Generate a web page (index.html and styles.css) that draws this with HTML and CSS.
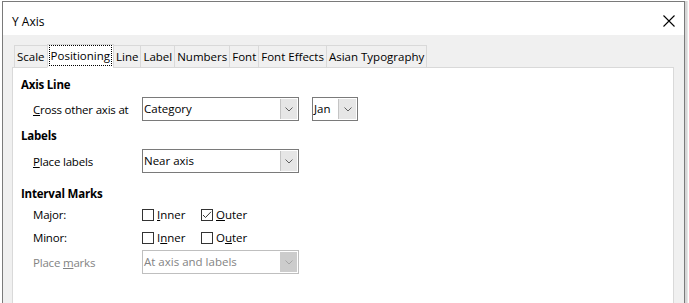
FILE: index.html
```html
<!DOCTYPE html>
<html>
<head>
<meta charset="utf-8">
<link rel="stylesheet" href="styles.css">
</head>
<body>
<div class="window">
  <div class="titlebar">
    <span class="title">Y Axis</span>
    <svg class="close" width="12" height="12" viewBox="0 0 12 12"><path d="M0.5 0.5 L11.5 11.5 M11.5 0.5 L0.5 11.5" stroke="#000" stroke-width="1.1" fill="none"/></svg>
  </div>
  <div class="body">
    <div class="tabs">
      <div class="tab">Scale</div>
      <div class="tab active"><span class="focus">Positioning</span></div>
      <div class="tab">Line</div>
      <div class="tab">Label</div>
      <div class="tab">Numbers</div>
      <div class="tab">Font</div>
      <div class="tab">Font Effects</div>
      <div class="tab">Asian Typography</div>
    </div>
    <div class="panel">
      <div class="heading h1">Axis Line</div>
      <div class="row r-cross">
        <span class="label"><u>C</u>ross other axis at</span>
        <div class="combo wide"><span class="val">Category</span><span class="btn"><svg width="8" height="5" viewBox="0 0 8 5"><path d="M0.5 0.5 L4 4 L7.5 0.5" stroke="#606060" fill="none"/></svg></span></div>
        <div class="combo small"><span class="val">Jan</span><span class="btn"><svg width="8" height="5" viewBox="0 0 8 5"><path d="M0.5 0.5 L4 4 L7.5 0.5" stroke="#606060" fill="none"/></svg></span></div>
      </div>
      <div class="heading h2">Labels</div>
      <div class="row r-place">
        <span class="label"><u>P</u>lace labels</span>
        <div class="combo wide"><span class="val">Near axis</span><span class="btn"><svg width="8" height="5" viewBox="0 0 8 5"><path d="M0.5 0.5 L4 4 L7.5 0.5" stroke="#606060" fill="none"/></svg></span></div>
      </div>
      <div class="heading h3">Interval Marks</div>
      <div class="row r-check r-major">
        <span class="label">Major:</span>
        <span class="check"><span class="box"></span><span><u>I</u>nner</span></span>
        <span class="check"><span class="box"><svg width="10" height="10" viewBox="0 0 10 10"><path d="M1 5 L3.5 7.5 L9 1.8" stroke="#333" stroke-width="1" fill="none"/></svg></span><span><u>O</u>uter</span></span>
      </div>
      <div class="row r-check r-minor">
        <span class="label">Minor:</span>
        <span class="check"><span class="box"></span><span>I<u>n</u>ner</span></span>
        <span class="check"><span class="box"></span><span>O<u>u</u>ter</span></span>
      </div>
      <div class="row r-marks disabled">
        <span class="label">Place <u>m</u>arks</span>
        <div class="combo wide dis"><span class="val">At axis and labels</span><span class="btn"><svg width="8" height="5" viewBox="0 0 8 5"><path d="M0.5 0.5 L4 4 L7.5 0.5" stroke="#a6a6a6" fill="none"/></svg></span></div>
      </div>
    </div>
  </div>
</div>
</body>
</html>
```

FILE: styles.css
```css
html, body {
  margin: 0;
  padding: 0;
  background: #ffffff;
  overflow: hidden;
}
body {
  font-family: "Open Sans", "Noto Sans", sans-serif;
  font-size: 11.5px;
  color: #000;
  width: 689px;
  height: 303px;
}
.window {
  margin: 1px 0 0 2px;
  width: 681px;
  height: 310px;
  border: 1px solid #7a7a7a;
  border-bottom: none;
  box-shadow: 2px 0 0 #d6d6d6, 3px 0 0 #e6e6e6;
  display: flex;
  flex-direction: column;
}
.titlebar {
  height: 33px;
  background: #fff;
  display: flex;
  align-items: center;
  justify-content: space-between;
  padding: 0 9px 0 9px;
  flex: none;
}
.title {
  font-size: 12px;
  padding-top: 5px;
}
.close {
  margin-top: 4px;
}
.body {
  flex: 1;
  background: #f0f0f0;
  padding: 9px 10px 0 9px;
  display: flex;
  flex-direction: column;
}
.tabs {
  display: flex;
  align-items: flex-end;
  height: 24px;
  padding-left: 2px;
  position: relative;
  z-index: 1;
  margin-bottom: -1px;
  flex: none;
}
.tab {
  height: 21px;
  line-height: 21px;
  padding: 0 2px;
  border: 1px solid #d9d9d9;
  margin-right: -1px;
  background: #f0f0f0;
  white-space: nowrap;
}
.tab.active {
  height: 22px;
  background: #fff;
  border-bottom-color: #fff;
  padding: 0 1px;
  display: flex;
  align-items: stretch;
}
.focus {
  border: 1px dotted #000;
  padding: 0 1px;
  line-height: 19px;
  margin: 0 0 1px 0;
}
.panel {
  flex: 1;
  background: #fff;
  border: 1px solid #d9d9d9;
  border-bottom: none;
  padding: 8px 0 0 8px;
}
.heading {
  font-weight: bold;
  height: 18px;
  line-height: 18px;
  letter-spacing: -0.2px;
}
.h1 { margin-top: 0; }
.h2 { margin-top: 6px; }
.h3 { margin-top: 12px; }
.row {
  display: flex;
  align-items: center;
  padding-left: 12px;
}
.row .label {
  width: 109px;
  flex: none;
  letter-spacing: -0.2px;
}
.r-cross { margin-top: 3px; }
.r-place { margin-top: 4px; }
.r-check { height: 21px; }
.r-major { margin-top: 1px; }
.r-minor { margin-top: 2px; }
.r-marks { margin-top: 2px; }
.combo {
  height: 22px;
  border: 1px solid #7a7a7a;
  background: #fff;
  display: flex;
  align-items: stretch;
  box-sizing: content-box;
}
.combo.wide { width: 155px; }
.combo.small { width: 44px; margin-left: 13px; }
.val {
  flex: 1;
  padding-left: 1px;
  line-height: 22px;
  white-space: nowrap;
  overflow: hidden;
}
.btn {
  width: 16px;
  flex: none;
  background: #e6e6e6;
  border-left: 1px solid #c4c4c4;
  display: flex;
  align-items: center;
  justify-content: center;
  margin: 1px 1px 1px 0;
}
.combo.small .btn { width: 17px; }
.check {
  display: flex;
  align-items: center;
  width: 59px;
}
.box {
  width: 10px;
  height: 10px;
  border: 1px solid #333;
  background: #fff;
  margin-right: 3px;
  display: flex;
  align-items: center;
  justify-content: center;
  flex: none;
}
.disabled { color: #838383; }
.combo.dis {
  border-color: #bfbfbf;
}
.combo.dis .btn {
  background: #cccccc;
  border-left: 1px solid #cccccc;
}
```
